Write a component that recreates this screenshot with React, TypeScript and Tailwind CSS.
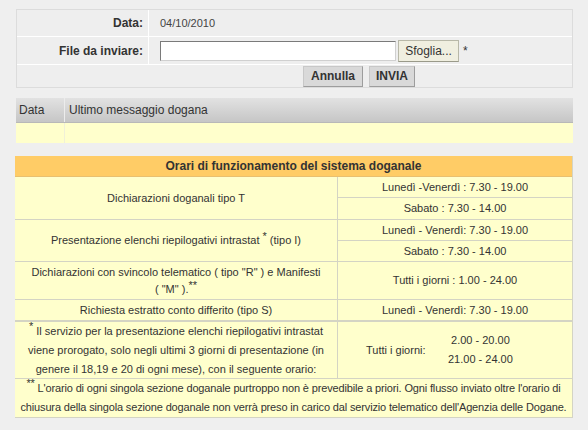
import React from 'react'

const font = { fontFamily: '"Liberation Sans", Arial, sans-serif' }

function Sup({ children }: { children: React.ReactNode }) {
  return <span className="inline-block text-[11px] leading-none align-top -mt-[1px]">{children}</span>
}

export default function App() {
  return (
    <div className="w-[588px] h-[430px] bg-[#efefef] text-[#333] text-[11px] overflow-hidden" style={font}>
      {/* Form box */}
      <div className="ml-[16px] mt-[9px] w-[557px] border border-[#dcdcdc] bg-[#eeeeee]">
        <div className="flex h-[27px] border-b border-white">
          <div className="w-[132px] border-r border-white flex items-center justify-end pr-[5px] font-bold text-[12px]">Data:</div>
          <div className="flex items-center pl-[11px] text-[#444]">04/10/2010</div>
        </div>
        <div className="flex h-[28px] border-b border-white">
          <div className="w-[132px] border-r border-white flex items-center justify-end pr-[5px] font-bold text-[12px]">File da inviare:</div>
          <div className="flex items-center pl-[11px]">
            <div className="w-[236px] h-[20px] bg-white border border-[#7a7a7a] border-r-[#d0d0d0] border-b-[#d0d0d0]" />
            <div className="ml-[2px] w-[61px] h-[22px] bg-[#f0efe0] border border-[#b8b8a8] border-b-[#9a9a8a] flex items-center justify-center text-[12px]">Sfoglia...</div>
            <span className="ml-[4px] text-[12px]">*</span>
          </div>
        </div>
        <div className="flex h-[22px] items-center justify-center pl-[129px]">
          <div className="w-[60px] h-[21px] bg-[#d9d9d9] border border-[#9d9d9d] border-t-[#c8c8c8] border-l-[#c8c8c8] flex items-center justify-center font-bold text-[12px]">Annulla</div>
          <div className="ml-[6px] w-[46px] h-[21px] bg-[#d9d9d9] border border-[#9d9d9d] border-t-[#c8c8c8] border-l-[#c8c8c8] flex items-center justify-center font-bold text-[12px]">INVIA</div>
        </div>
      </div>

      {/* Message table */}
      <div className="ml-[16px] mt-[10px] w-[557px]">
        <div className="flex h-[25px] bg-gradient-to-b from-[#e2e2e2] to-[#c6c6c6] border-b border-[#b8b8b8]">
          <div className="w-[49px] border-r border-[#ececec] flex items-center pl-[3px] text-[12px]">Data</div>
          <div className="flex items-center pl-[4px] text-[12px]">Ultimo messaggio dogana</div>
        </div>
        <div className="flex h-[20px] bg-[#ffffcc]">
          <div className="w-[49px] border-r border-[#f0f0d8]" />
          <div className="flex-1" />
        </div>
      </div>

      {/* Hours table */}
      <div className="ml-[15px] mt-[13px] w-[558px] bg-[#ffffcc] border-r border-b border-[#d4d4c4]">
        <div className="h-[21px] bg-[#ffcc66] flex items-center justify-center font-bold text-[12px] border-b border-[#e8c070]">
          Orari di funzionamento del sistema doganale
        </div>
        <div className="flex border-b border-[#d4d4c4]">
          <div className="w-[323px] border-r border-[#d4d4c4] flex items-center justify-center">Dichiarazioni doganali tipo T</div>
          <div className="flex-1">
            <div className="h-[21px] border-b border-[#d4d4c4] flex items-center justify-center">Lunedì -Venerdì : 7.30 - 19.00</div>
            <div className="h-[21px] flex items-center justify-center">Sabato : 7.30 - 14.00</div>
          </div>
        </div>
        <div className="flex border-b border-[#d4d4c4]">
          <div className="w-[323px] border-r border-[#d4d4c4] flex items-center justify-center">
            <span>Presentazione elenchi riepilogativi intrastat <Sup>*</Sup> (tipo I)</span>
          </div>
          <div className="flex-1">
            <div className="h-[21px] border-b border-[#d4d4c4] flex items-center justify-center">Lunedì - Venerdì: 7.30 - 19.00</div>
            <div className="h-[20px] flex items-center justify-center">Sabato : 7.30 - 14.00</div>
          </div>
        </div>
        <div className="flex h-[38px] border-b border-[#d4d4c4]">
          <div className="w-[323px] border-r border-[#d4d4c4] flex items-center justify-center text-center leading-[17px] pt-[1px]">
            <span>Dichiarazioni con svincolo telematico ( tipo "R" ) e Manifesti<br />( "M" ).<Sup>**</Sup></span>
          </div>
          <div className="flex-1 flex items-center justify-center">Tutti i giorni : 1.00 - 24.00</div>
        </div>
        <div className="flex h-[22px] border-b-2 border-[#d4d4c4]">
          <div className="w-[323px] border-r border-[#d4d4c4] flex items-center justify-center">Richiesta estratto conto differito (tipo S)</div>
          <div className="flex-1 flex items-center justify-center">Lunedì - Venerdì: 7.30 - 19.00</div>
        </div>
        <div className="flex h-[57px] border-b border-[#d4d4c4]">
          <div className="w-[323px] border-r border-[#d4d4c4] flex items-center justify-center text-center leading-[19px] px-[6px]">
            <span><Sup>*</Sup> Il servizio per la presentazione elenchi riepilogativi intrastat viene prorogato, solo negli ultimi 3 giorni di presentazione (in genere il 18,19 e 20 di ogni mese), con il seguente orario:</span>
          </div>
          <div className="flex-1 flex items-center">
            <div className="w-[110px] pl-[28px]">Tutti i giorni:</div>
            <div className="leading-[19px] text-center">
              <div>2.00 - 20.00</div>
              <div>21.00 - 24.00</div>
            </div>
          </div>
        </div>
        <div className="h-[38px] flex items-center justify-center text-center leading-[19px] tracking-[-0.15px]">
          <span><Sup>**</Sup> L'orario di ogni singola sezione doganale purtroppo non è prevedibile a priori. Ogni flusso inviato oltre l'orario di chiusura della singola sezione doganale non verrà preso in carico dal servizio telematico dell'Agenzia delle Dogane.</span>
        </div>
      </div>
    </div>
  )
}
